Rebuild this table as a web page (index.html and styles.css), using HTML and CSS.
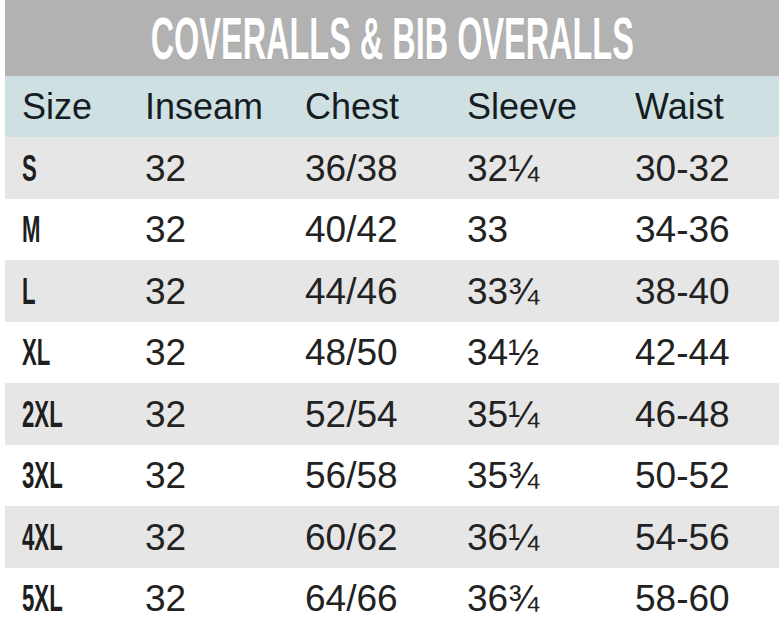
FILE: index.html
```html
<!DOCTYPE html>
<html>
<head>
<meta charset="utf-8">
<link rel="stylesheet" href="styles.css">
</head>
<body>
<div class="chart">
  <div class="title"><span class="title-text">COVERALLS &amp; BIB OVERALLS</span></div>
  <div class="row head">
    <div class="cell">Size</div><div class="cell">Inseam</div><div class="cell">Chest</div><div class="cell">Sleeve</div><div class="cell">Waist</div>
  </div>
  <div class="row alt"><div class="cell size"><span>S</span></div><div class="cell">32</div><div class="cell">36/38</div><div class="cell">32¼</div><div class="cell">30-32</div></div>
  <div class="row"><div class="cell size"><span>M</span></div><div class="cell">32</div><div class="cell">40/42</div><div class="cell">33</div><div class="cell">34-36</div></div>
  <div class="row alt"><div class="cell size"><span>L</span></div><div class="cell">32</div><div class="cell">44/46</div><div class="cell">33¾</div><div class="cell">38-40</div></div>
  <div class="row"><div class="cell size"><span>XL</span></div><div class="cell">32</div><div class="cell">48/50</div><div class="cell">34½</div><div class="cell">42-44</div></div>
  <div class="row alt"><div class="cell size"><span>2XL</span></div><div class="cell">32</div><div class="cell">52/54</div><div class="cell">35¼</div><div class="cell">46-48</div></div>
  <div class="row"><div class="cell size"><span>3XL</span></div><div class="cell">32</div><div class="cell">56/58</div><div class="cell">35¾</div><div class="cell">50-52</div></div>
  <div class="row alt"><div class="cell size"><span>4XL</span></div><div class="cell">32</div><div class="cell">60/62</div><div class="cell">36¼</div><div class="cell">54-56</div></div>
  <div class="row"><div class="cell size"><span>5XL</span></div><div class="cell">32</div><div class="cell">64/66</div><div class="cell">36¾</div><div class="cell">58-60</div></div>
</div>
</body>
</html>
```
FILE: styles.css
```css
html, body {
  margin: 0;
  padding: 0;
  background: #ffffff;
}
body {
  font-family: "Liberation Sans", Arial, sans-serif;
  color: #222222;
  overflow: hidden;
}
.chart {
  margin-left: 5px;
  width: 774px;
}
.title {
  height: 76px;
  background: #b2b2b2;
  display: flex;
  align-items: center;
  justify-content: center;
  overflow: hidden;
}
.title-text {
  display: inline-block;
  font-weight: bold;
  font-size: 59px;
  line-height: 1;
  color: #ffffff;
  white-space: nowrap;
  transform: scaleX(0.55);
  margin-top: 3px;
  text-shadow: 0 1px 1px rgba(0,0,0,0.08);
}
.row {
  display: grid;
  grid-template-columns: 123px 160px 162px 168px 1fr;
  padding-left: 17px;
  height: 61.5px;
  align-items: center;
  font-size: 37px;
  line-height: 1;
}
.row.head {
  height: 61px;
  background: #cfe0e2;
  color: #151c22;
  font-size: 36px;
}
.row.alt {
  background: #e6e6e7;
}
.cell {
  white-space: nowrap;
  padding-top: 1px;
}
.size span {
  display: inline-block;
  font-weight: bold;
  font-size: 37px;
  color: #1e1e1e;
  transform: scaleX(0.6);
  transform-origin: left center;
}
```
